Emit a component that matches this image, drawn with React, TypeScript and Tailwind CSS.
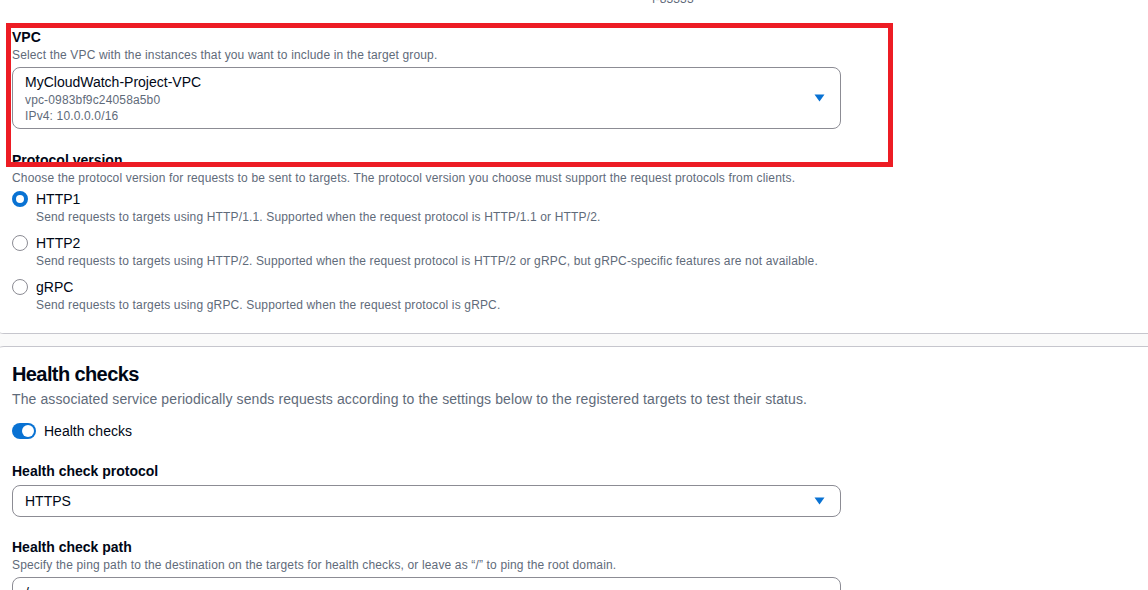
import React from 'react';

const font = { fontFamily: '"Liberation Sans", Arial, sans-serif' };

function Caret() {
  return (
    <svg width="11" height="8" viewBox="0 0 11 8" className="shrink-0">
      <path d="M0.5 0.5 H10.5 L5.5 7.5 Z" fill="#0972d3" />
    </svg>
  );
}

function Radio({ checked }: { checked?: boolean }) {
  return checked ? (
    <span className="mt-[2px] h-[16px] w-[16px] shrink-0 rounded-full border-[4px] border-[#0972d3] bg-white" />
  ) : (
    <span className="mt-[2px] h-[16px] w-[16px] shrink-0 rounded-full border-[1.5px] border-[#8c8c94] bg-white" />
  );
}

const protocols = [
  {
    name: 'HTTP1',
    desc: 'Send requests to targets using HTTP/1.1. Supported when the request protocol is HTTP/1.1 or HTTP/2.',
    checked: true,
  },
  {
    name: 'HTTP2',
    desc: 'Send requests to targets using HTTP/2. Supported when the request protocol is HTTP/2 or gRPC, but gRPC-specific features are not available.',
  },
  {
    name: 'gRPC',
    desc: 'Send requests to targets using gRPC. Supported when the request protocol is gRPC.',
  },
];

export default function App() {
  return (
    <div className="relative h-[590px] w-[1148px] overflow-hidden bg-[#fafafa] text-[#000716]" style={font}>
      {/* target group details card (bottom part) */}
      <div className="-ml-[8px] w-[1180px] rounded-b-[12px] border-b border-[#c6c6cd] bg-white pl-[20px] pb-[20px]">
        <p className="-mt-[9px] ml-[640px] text-[12px] leading-[16px] tracking-[0.15px] text-[#5f6b7a]">f-83333</p>

        <div className="mt-[20px]">
          <div className="text-[14px] font-bold leading-[20px]">VPC</div>
          <div className="text-[12px] leading-[16px] tracking-[0.15px] text-[#5f6b7a]">
            Select the VPC with the instances that you want to include in the target group.
          </div>
          <div className="mt-[4px] flex w-[829px] items-center rounded-[8px] border border-[#8c8c94] pl-[12px] pr-[15px] pt-[4px] pb-[4px]">
            <div className="flex-1">
              <div className="text-[14px] leading-[20px]">MyCloudWatch-Project-VPC</div>
              <div className="text-[12px] leading-[16px] tracking-[0.15px] text-[#5f6b7a]">vpc-0983bf9c24058a5b0</div>
              <div className="text-[12px] leading-[16px] tracking-[0.15px] text-[#5f6b7a]">IPv4: 10.0.0.0/16</div>
            </div>
            <Caret />
          </div>
        </div>

        <div className="mt-[21px]">
          <div className="text-[14px] font-bold leading-[20px]">Protocol version</div>
          <div className="text-[12px] leading-[16px] tracking-[0.15px] text-[#5f6b7a]">
            Choose the protocol version for requests to be sent to targets. The protocol version you choose must support the request protocols from clients.
          </div>
          <div className="mt-[3px] flex flex-col gap-[8px]">
            {protocols.map((p) => (
              <div key={p.name} className="flex gap-[8px]">
                <Radio checked={p.checked} />
                <div>
                  <div className="text-[14px] leading-[20px]">{p.name}</div>
                  <div className="text-[12px] leading-[16px] tracking-[0.15px] text-[#5f6b7a]">{p.desc}</div>
                </div>
              </div>
            ))}
          </div>
        </div>
      </div>

      {/* Health checks card */}
      <div className="-ml-[8px] mt-[12px] w-[1180px] rounded-t-[12px] border-t border-[#c6c6cd] bg-white pl-[20px] pt-[14px] pb-[40px]">
        <h2 className="text-[20px] font-bold leading-[26px] tracking-[-0.6px]">Health checks</h2>
        <p className="mt-[2px] text-[14px] leading-[20px] tracking-[0.1px] text-[#5f6b7a]">
          The associated service periodically sends requests according to the settings below to the registered targets to test their status.
        </p>

        <div className="mt-[12px] flex items-center gap-[8px]">
          <span className="flex h-[16px] w-[24px] items-center justify-end rounded-full bg-[#0972d3] px-[2px]">
            <span className="h-[12px] w-[12px] rounded-full bg-white" />
          </span>
          <span className="text-[14px] leading-[20px]">Health checks</span>
        </div>

        <div className="mt-[20px]">
          <div className="text-[14px] font-bold leading-[20px]">Health check protocol</div>
          <div className="mt-[4px] flex h-[32px] w-[829px] items-center rounded-[8px] border border-[#8c8c94] pl-[12px] pr-[15px]">
            <span className="flex-1 text-[14px] leading-[20px]">HTTPS</span>
            <Caret />
          </div>
        </div>

        <div className="mt-[20px]">
          <div className="text-[14px] font-bold leading-[20px]">Health check path</div>
          <div className="text-[12px] leading-[16px] tracking-[0.15px] text-[#5f6b7a]">
            Specify the ping path to the destination on the targets for health checks, or leave as “/” to ping the root domain.
          </div>
          <div className="mt-[4px] flex h-[32px] w-[829px] items-center rounded-[8px] border border-[#8c8c94] pl-[12px]">
            <span className="text-[14px] leading-[20px]">/</span>
          </div>
        </div>
      </div>

      {/* red annotation box */}
      <div className="pointer-events-none absolute left-[6px] top-[23px] h-[144px] w-[887px] border-[5px] border-[#ed1c24]" />
    </div>
  );
}
